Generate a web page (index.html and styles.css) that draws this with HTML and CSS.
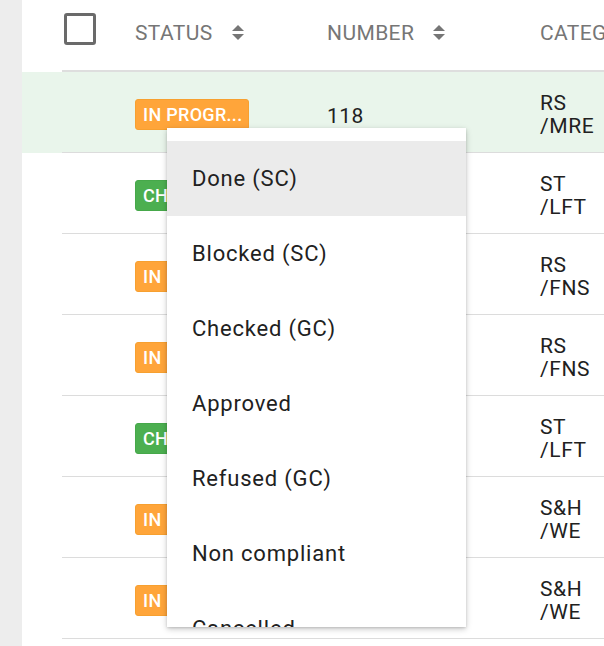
FILE: index.html
```html
<!DOCTYPE html>
<html lang="en">
<head>
  <meta charset="UTF-8">
  <meta name="viewport" content="width=device-width, initial-scale=1.0">
  <title>Tasks</title>
  <link rel="stylesheet" href="styles.css">
</head>
<body>
  <div class="page">
    <div class="sidebar"></div>

    <div class="content">
      <!-- table header -->
      <div class="head-row">
        <div class="cells head-cells">
          <div class="cell-check"><span class="checkbox"></span></div>
          <div class="head-label">Status <span class="sort"><i class="up"></i><i class="down"></i></span></div>
          <div class="head-label">Number <span class="sort"><i class="up"></i><i class="down"></i></span></div>
          <div class="head-label">Category <span class="sort"><i class="up"></i><i class="down"></i></span></div>
        </div>
      </div>

      <!-- rows -->
      <div class="row selected">
        <div class="cells">
          <div class="cell-check"></div>
          <div><span class="badge orange">IN PROGR...</span></div>
          <div class="num">118</div>
          <div class="cat">RS<br>/MRE</div>
        </div>
      </div>
      <div class="row">
        <div class="cells">
          <div class="cell-check"></div>
          <div><span class="badge green">CHECKED</span></div>
          <div class="num">117</div>
          <div class="cat">ST<br>/LFT</div>
        </div>
      </div>
      <div class="row">
        <div class="cells">
          <div class="cell-check"></div>
          <div><span class="badge orange">IN PROGR...</span></div>
          <div class="num">116</div>
          <div class="cat">RS<br>/FNS</div>
        </div>
      </div>
      <div class="row">
        <div class="cells">
          <div class="cell-check"></div>
          <div><span class="badge orange">IN PROGR...</span></div>
          <div class="num">115</div>
          <div class="cat">RS<br>/FNS</div>
        </div>
      </div>
      <div class="row">
        <div class="cells">
          <div class="cell-check"></div>
          <div><span class="badge green">CHECKED</span></div>
          <div class="num">114</div>
          <div class="cat">ST<br>/LFT</div>
        </div>
      </div>
      <div class="row">
        <div class="cells">
          <div class="cell-check"></div>
          <div><span class="badge orange">IN PROGR...</span></div>
          <div class="num">113</div>
          <div class="cat">S&amp;H<br>/WE</div>
        </div>
      </div>
      <div class="row">
        <div class="cells">
          <div class="cell-check"></div>
          <div><span class="badge orange">IN PROGR...</span></div>
          <div class="num">112</div>
          <div class="cat">S&amp;H<br>/WE</div>
        </div>
      </div>

      <!-- status dropdown -->
      <ul class="status-menu">
        <li class="active">Done (SC)</li>
        <li>Blocked (SC)</li>
        <li>Checked (GC)</li>
        <li>Approved</li>
        <li>Refused (GC)</li>
        <li>Non compliant</li>
        <li>Cancelled</li>
      </ul>
    </div>
  </div>
</body>
</html>
```

FILE: styles.css
```css
html, body {
  margin: 0;
  height: 100%;
  overflow: hidden;
}
body {
  font-family: Roboto, "Liberation Sans", Arial, sans-serif;
  color: #212121;
  background: #ffffff;
}
.page {
  display: flex;
  height: 100%;
}
.sidebar {
  width: 22px;
  flex: none;
  background: #ededed;
}
.content {
  position: relative;
  flex: 1;
  min-width: 0;
  overflow: hidden;
}
.cells {
  display: grid;
  grid-template-columns: 73px 192px 213px 1fr;
  align-items: center;
  margin-left: 40px;
  white-space: nowrap;
}
.head-cells {
  box-sizing: border-box;
  height: 72px;
  padding-bottom: 5px;
  border-bottom: 2px solid #dedede;
}
.cell-check {
  padding-left: 2px;
}
.checkbox {
  display: block;
  width: 26px;
  height: 26px;
  border: 3px solid #6a6a6a;
  border-radius: 3px;
  margin-bottom: 8px;
}
.head-label {
  font-size: 21px;
  font-weight: 400;
  letter-spacing: 0.4px;
  color: #767676;
  text-transform: uppercase;
  display: flex;
  align-items: center;
}
.sort {
  display: inline-flex;
  flex-direction: column;
  gap: 3px;
  margin-left: 19px;
}
.sort i {
  display: block;
  width: 0;
  height: 0;
  border-left: 6px solid transparent;
  border-right: 6px solid transparent;
}
.sort .up {
  border-bottom: 6px solid #767676;
}
.sort .down {
  border-top: 6px solid #767676;
}
.row .cells {
  height: 80px;
  border-bottom: 1px solid #dcdcdc;
}
.row.selected {
  background: #e9f5eb;
}
.badge {
  display: inline-block;
  color: #ffffff;
  font-size: 18px;
  font-weight: 500;
  line-height: 29px;
  padding: 0 6px 0 7px;
  border-radius: 3px;
  margin-top: 5px;
  letter-spacing: 0.3px;
}
.badge.orange {
  background: #ffa53a;
  border: 1px solid #f7a030;
}
.badge.green {
  background: #4caf50;
  border: 1px solid #46a84a;
}
.num {
  font-size: 21px;
  letter-spacing: 0.5px;
  margin-top: 8px;
}
.cat {
  font-size: 21px;
  line-height: 23px;
  letter-spacing: 0.6px;
  margin-top: 5px;
}
.status-menu {
  position: absolute;
  left: 145px;
  top: 128px;
  width: 299px;
  height: 486px;
  margin: 0;
  padding: 13px 0 0;
  list-style: none;
  background: #ffffff;
  overflow: hidden;
  box-shadow: 0 2px 6px rgba(0, 0, 0, 0.22), 0 1px 2px rgba(0, 0, 0, 0.12);
}
.status-menu li {
  height: 75px;
  line-height: 75px;
  padding-left: 25px;
  font-size: 22px;
  letter-spacing: 0.8px;
  color: #212121;
}
.status-menu li.active {
  background: #ebebeb;
}
```
